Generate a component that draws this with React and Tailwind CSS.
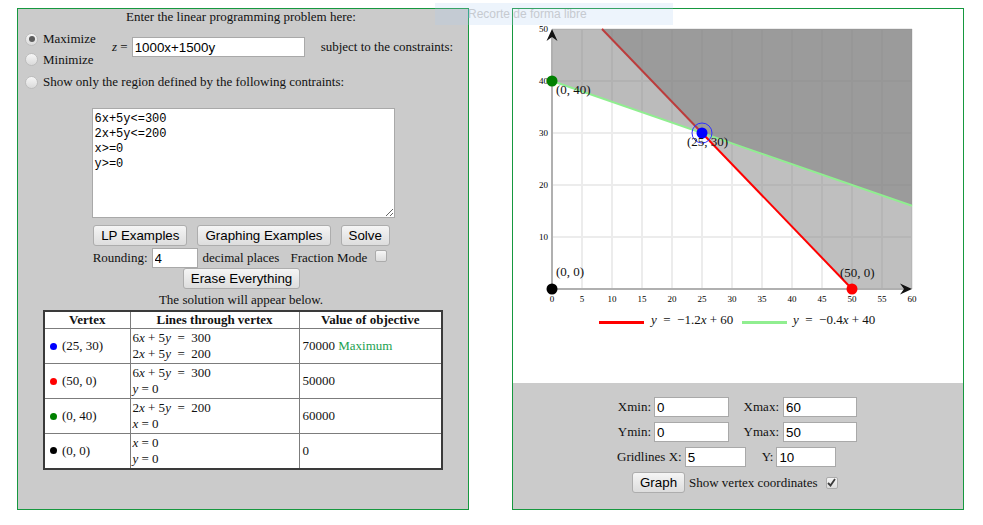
import React from "react";

const sans = "font-['Liberation_Sans',Arial,sans-serif]";

function Radio({ checked }) {
  return (
    <span className="flex items-center justify-center w-[13px] h-[13px] rounded-full border border-[#bdbdbd] bg-linear-to-b from-[#f7f7f7] to-[#dadada] shrink-0">
      {checked && <span className="w-[6px] h-[6px] rounded-full bg-[#5c5c5c]" />}
    </span>
  );
}

function Checkbox({ checked, className = "" }) {
  return (
    <span
      className={
        "flex items-center justify-center w-[12px] h-[12px] rounded-[2px] border border-[#ababab] bg-linear-to-b from-[#f6f6f6] to-[#dcdcdc] shrink-0 " +
        className
      }
    >
      {checked && (
        <svg width="9" height="9" viewBox="0 0 9 9">
          <path d="M1 5 L3.5 7.5 L8 1" fill="none" stroke="#3a3a3a" strokeWidth="1.8" />
        </svg>
      )}
    </span>
  );
}

function Button({ children, className = "" }) {
  return (
    <button
      className={
        "h-[21px] px-[7px] border border-[#adadad] rounded-[3px] bg-linear-to-b from-[#f5f5f5] to-[#dddddd] text-[13.333px] leading-none text-black " +
        sans +
        " " +
        className
      }
    >
      {children}
    </button>
  );
}

function TextInput({ value, className = "" }) {
  return (
    <input
      readOnly
      value={value}
      className={
        "h-[20px] border border-[#a9a9a9] bg-white px-[2px] text-[13.333px] text-black outline-none " +
        sans +
        " " +
        className
      }
    />
  );
}

function Graph() {
  const X = (x) => 39 + 6 * x;
  const Y = (y) => 280 - 5.2 * y;
  const xTicks = [0, 5, 10, 15, 20, 25, 30, 35, 40, 45, 50, 55, 60];
  const yTicks = [10, 20, 30, 40, 50];

  return (
    <svg width="449" height="373" className="block font-['Liberation_Serif','Times_New_Roman',serif]">
      {/* grid */}
      {xTicks.slice(1).map((v) => (
        <line key={"gx" + v} x1={X(v)} y1={Y(50)} x2={X(v)} y2={Y(0)} stroke="#ececec" strokeWidth="2" />
      ))}
      {yTicks.map((v) => (
        <line key={"gy" + v} x1={X(0)} y1={Y(v)} x2={X(60)} y2={Y(v)} stroke="#ececec" strokeWidth="2" />
      ))}

      {/* 6x+5y<=300 shading, then its line */}
      <polygon points="89,20 399,20 399,280 339,280" fill="#808080" fillOpacity="0.5" />
      <line x1="89" y1="20" x2="339" y2="280" stroke="#ff0000" strokeWidth="2" />

      {/* 2x+5y<=200 shading, then its line */}
      <polygon points="39,20 399,20 399,196.8 39,72" fill="#787878" fillOpacity="0.5" />
      <line x1="39" y1="72" x2="399" y2="196.8" stroke="#90ee90" strokeWidth="2" />

      {/* axes */}
      <line x1={X(0)} y1={Y(0)} x2={X(0)} y2={Y(50) + 2} stroke="#b0b0b0" strokeWidth="2" />
      <line x1={X(0)} y1={Y(0)} x2={X(60) - 2} y2={Y(0)} stroke="#b0b0b0" strokeWidth="2" />
      <path d="M39 20 L33.5 32 L39 28 L44.5 32 Z" fill="#111" />
      <path d="M399 280 L387 274.5 L391 280 L387 285.5 Z" fill="#111" />

      {/* tick labels */}
      {xTicks.map((v) => (
        <text key={"tx" + v} x={X(v)} y="293" fontSize="9" textAnchor="middle" fill="#000">
          {v}
        </text>
      ))}
      {yTicks.map((v) => (
        <text key={"ty" + v} x="35" y={Y(v) + 3} fontSize="9" textAnchor="end" fill="#000">
          {v}
        </text>
      ))}

      {/* vertices */}
      <circle cx={X(25)} cy={Y(30)} r="10" fill="none" stroke="#3030ff" strokeWidth="1" />
      <circle cx={X(25)} cy={Y(30)} r="5.5" fill="#0000ff" />
      <circle cx={X(0)} cy={Y(40)} r="5.5" fill="#008000" />
      <circle cx={X(50)} cy={Y(0)} r="5.5" fill="#ff0000" />
      <circle cx={X(0)} cy={Y(0)} r="5.5" fill="#000" />

      <text x="43" y="84.5" fontSize="13" fill="#111">(0, 40)</text>
      <text x="174" y="137" fontSize="13" fill="#111">(25, 30)</text>
      <text x="43" y="267" fontSize="13" fill="#111">(0, 0)</text>
      <text x="327" y="267.5" fontSize="13" fill="#111">(50, 0)</text>

      {/* legend */}
      <line x1="86" y1="313.5" x2="131" y2="313.5" stroke="#ff0000" strokeWidth="3" />
      <text x="138" y="314.5" fontSize="13" fill="#111" className="whitespace-pre">
        <tspan fontStyle="italic">y</tspan>
        {"  =  −1.2"}
        <tspan fontStyle="italic">x</tspan>
        {" + 60"}
      </text>
      <line x1="229" y1="313.5" x2="274" y2="313.5" stroke="#90ee90" strokeWidth="3" />
      <text x="280" y="314.5" fontSize="13" fill="#111" className="whitespace-pre">
        <tspan fontStyle="italic">y</tspan>
        {"  =  −0.4"}
        <tspan fontStyle="italic">x</tspan>
        {" + 40"}
      </text>
    </svg>
  );
}

const rows = [
  {
    color: "bg-[#0000ff]",
    point: "(25, 30)",
    lines: [
      <span key="a">
        6<i>x</i> + 5<i>y</i>&nbsp; = &nbsp;300
      </span>,
      <span key="b">
        2<i>x</i> + 5<i>y</i>&nbsp; = &nbsp;200
      </span>,
    ],
    value: "70000",
    max: true,
  },
  {
    color: "bg-[#ff0000]",
    point: "(50, 0)",
    lines: [
      <span key="a">
        6<i>x</i> + 5<i>y</i>&nbsp; = &nbsp;300
      </span>,
      <span key="b">
        <i>y</i> = 0
      </span>,
    ],
    value: "50000",
  },
  {
    color: "bg-[#008000]",
    point: "(0, 40)",
    lines: [
      <span key="a">
        2<i>x</i> + 5<i>y</i>&nbsp; = &nbsp;200
      </span>,
      <span key="b">
        <i>x</i> = 0
      </span>,
    ],
    value: "60000",
  },
  {
    color: "bg-black",
    point: "(0, 0)",
    lines: [
      <span key="a">
        <i>x</i> = 0
      </span>,
      <span key="b">
        <i>y</i> = 0
      </span>,
    ],
    value: "0",
  },
];

export default function App() {
  return (
    <div className="relative h-[525px] bg-white text-[13px] text-[#111] font-['Liberation_Serif','Times_New_Roman',serif]">
      <div className="flex pt-[8px] pl-[17px] gap-[43px]">
        {/* left panel */}
        <div className="w-[452px] h-[502px] border border-[#16983f] bg-[#cbcbcb]">
          <div className="text-center leading-[16px] pr-[4px]">Enter the linear programming problem here:</div>

          <div className="flex items-start mt-[4px] pl-[7px]">
            <div className="w-[87px]">
              <label className="flex items-center h-[20px] gap-[5px]">
                <Radio checked />
                Maximize
              </label>
              <label className="flex items-center h-[21px] gap-[5px]">
                <Radio />
                Minimize
              </label>
            </div>
            <div className="flex items-center h-[20px] mt-[8px]">
              <span>
                <i>z</i> =
              </span>
              <TextInput value="1000x+1500y" className="ml-[4px] w-[173px]" />
              <span className="ml-[16px]">subject to the constraints:</span>
            </div>
          </div>

          <label className="flex items-center h-[20px] gap-[5px] mt-[2px] pl-[7px]">
            <Radio />
            Show only the region defined by the following contraints:
          </label>

          <textarea
            readOnly
            spellCheck={false}
            value={"6x+5y<=300\n2x+5y<=200\nx>=0\ny>=0"}
            className="block mx-auto mt-[16px] w-[303px] h-[110px] border border-[#a9a9a9] bg-white pt-[3px] px-[2px] text-[12px] leading-[15px] text-black outline-none font-['Liberation_Mono','DejaVu_Sans_Mono',monospace]"
          />

          <div className="flex justify-center gap-[10px] mt-[7px] pr-[3px]">
            <Button>LP Examples</Button>
            <Button>Graphing Examples</Button>
            <Button>Solve</Button>
          </div>

          <div className="flex items-center justify-center h-[20px] mt-[2px] pr-[6px]">
            <span>Rounding:</span>
            <TextInput value="4" className="ml-[4px] w-[46px]" />
            <span className="ml-[5px]">decimal places</span>
            <span className="ml-[11px]">Fraction Mode</span>
            <Checkbox className="ml-[8px] mb-[4px]" />
          </div>

          <div className="flex justify-center pr-[3px]">
            <Button>Erase Everything</Button>
          </div>

          <div className="text-center leading-[21px] pr-[4px]">The solution will appear below.</div>

          <table className="mx-auto w-[400px] border-collapse border-2 border-[#3a3a3a] bg-white">
            <thead>
              <tr className="h-[17px]">
                <th className="w-[86px] border border-[#7c7c7c] font-bold leading-[16px]">Vertex</th>
                <th className="w-[169px] border border-[#7c7c7c] font-bold leading-[16px]">Lines through vertex</th>
                <th className="border border-[#7c7c7c] font-bold leading-[16px]">Value of objective</th>
              </tr>
            </thead>
            <tbody>
              {rows.map((r) => (
                <tr key={r.point} className="h-[35px]">
                  <td className="border border-[#7c7c7c] pl-[5px]">
                    <span className="flex items-center gap-[5px]">
                      <span className={"w-[7px] h-[7px] rounded-full " + r.color} />
                      {r.point}
                    </span>
                  </td>
                  <td className="border border-[#7c7c7c] pl-[2px] leading-[16px]">
                    <div>{r.lines[0]}</div>
                    <div>{r.lines[1]}</div>
                  </td>
                  <td className="border border-[#7c7c7c] pl-[3px]">
                    {r.value}
                    {r.max && <span className="text-[#21a150]"> Maximum</span>}
                  </td>
                </tr>
              ))}
            </tbody>
          </table>
        </div>

        {/* right panel */}
        <div className="w-[452px] h-[502px] border border-[#16983f] flex flex-col">
          <div className="h-[374px] bg-white">
            <Graph />
          </div>
          <div className="flex-1 bg-[#cbcbcb] pt-[14px]">
            <div className="grid grid-cols-[38px_75px_54px_74px] gap-y-[5px] items-center ml-[103px]">
              <span className="text-right pr-[3px]">Xmin:</span>
              <TextInput value="0" className="w-[75px]" />
              <span className="text-right pr-[4px]">Xmax:</span>
              <TextInput value="60" className="w-[74px]" />
              <span className="text-right pr-[3px]">Ymin:</span>
              <TextInput value="0" className="w-[75px]" />
              <span className="text-right pr-[4px]">Ymax:</span>
              <TextInput value="50" className="w-[74px]" />
            </div>
            <div className="flex items-center h-[20px] mt-[5px] ml-[104px]">
              <span>Gridlines X:</span>
              <TextInput value="5" className="ml-[3px] w-[61px]" />
              <span className="ml-[16px]">Y:</span>
              <TextInput value="10" className="ml-[3px] w-[60px]" />
            </div>
            <div className="flex items-center h-[21px] mt-[5px] ml-[119px]">
              <Button className="w-[53px] px-0">Graph</Button>
              <span className="ml-[4px]">Show vertex coordinates</span>
              <Checkbox checked className="ml-[8px]" />
            </div>
          </div>
        </div>
      </div>

      {/* screen snip toolbar ghost */}
      <div className="absolute left-[435px] top-[3px] w-[238px] h-[22px] bg-[rgba(174,207,240,0.22)] flex items-center pl-[33px]">
        <span className={"text-[12px] text-[#c6cad0] " + sans}>Recorte de forma libre</span>
      </div>
    </div>
  );
}
